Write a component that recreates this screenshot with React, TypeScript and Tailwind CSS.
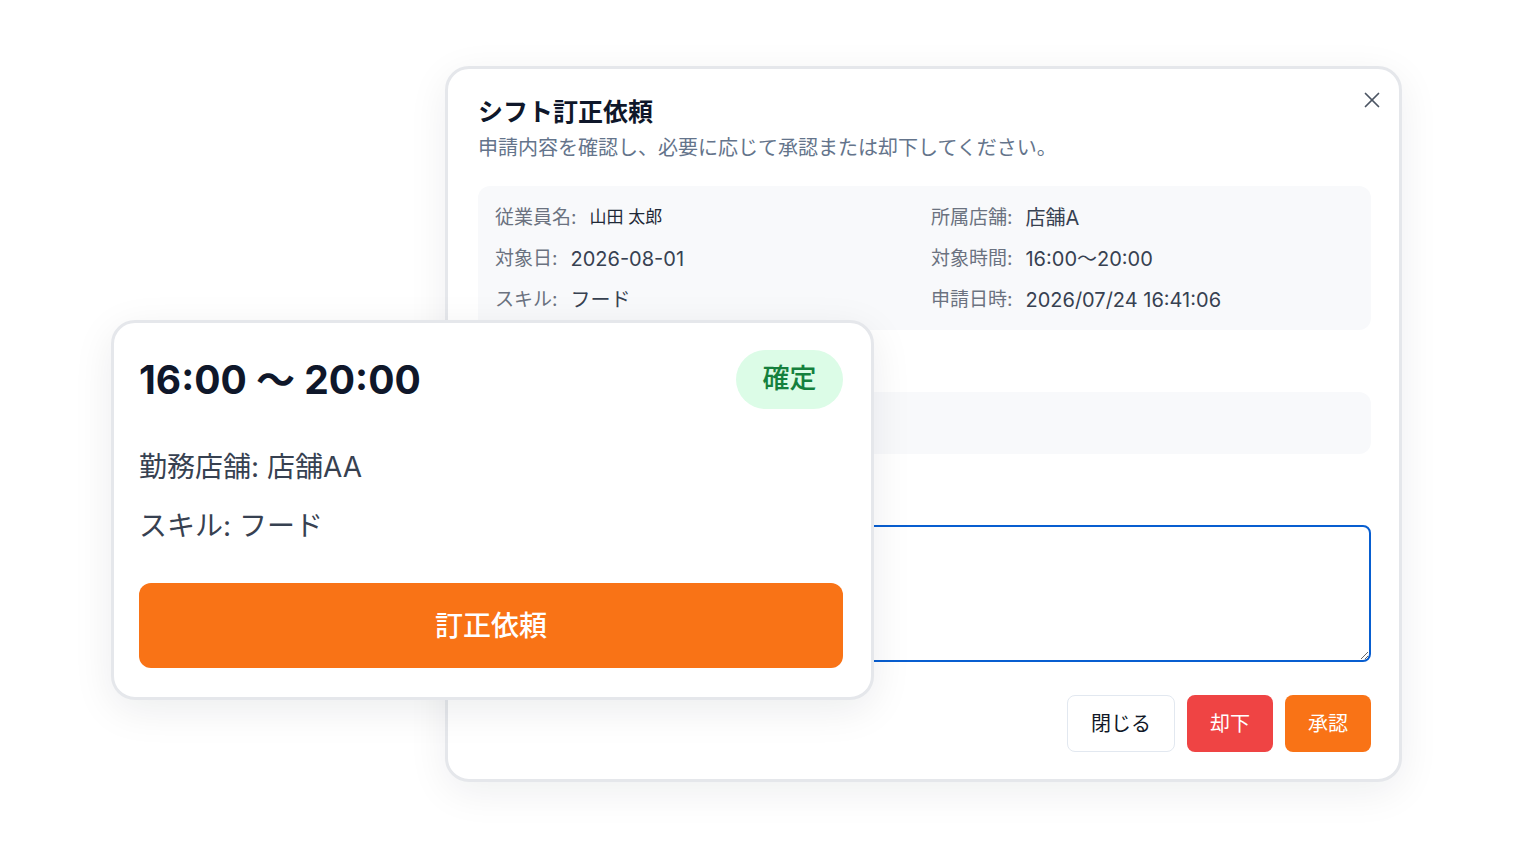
import { X } from "lucide-react";

const info = [
  { label: "従業員名:", value: "山田 太郎", small: true },
  { label: "所属店舗:", value: "店舗A" },
  { label: "対象日:", value: "2026-08-01" },
  { label: "対象時間:", value: "16:00〜20:00" },
  { label: "スキル:", value: "フード" },
  { label: "申請日時:", value: "2026/07/24 16:41:06" },
];

function ReviewDialog() {
  return (
    <div className="relative w-[957px] h-[716px] rounded-[24px] border-[3px] border-[#e5e7eb] bg-white pt-[27px] pl-[30px] pr-[28px] pb-[27px] shadow-[0_10px_40px_rgba(15,23,42,0.07)]">
      <button className="absolute top-[18px] right-[14px] text-[#4b5563]">
        <X size={26} strokeWidth={1.6} />
      </button>

      <h2 className="text-[25px] leading-8 font-bold text-[#0f172a]">シフト訂正依頼</h2>
      <p className="mt-[6px] text-[20px] leading-7 text-[#64748b]">
        申請内容を確認し、必要に応じて承認または却下してください。
      </p>

      {/* request info */}
      <div className="mt-6 grid grid-cols-2 gap-x-[13px] gap-y-[13px] rounded-xl bg-[#f8f9fb] px-[17px] pt-[18px] pb-[16px]">
        {info.map((row) => (
          <div key={row.label} className="flex items-center h-7 text-[19px]">
            <span className="text-[#6b7280]">{row.label}</span>
            <span className={row.small ? "ml-[13px] text-[17px] text-[#1f2937]" : "ml-[13px] text-[20px] text-[#374151]"}>
              {row.value}
            </span>
          </div>
        ))}
      </div>

      <p className="mt-[26px] text-[18px] leading-7 font-medium text-[#374151]">申請理由</p>
      <div className="mt-2 h-[62px] rounded-xl bg-[#f8f9fb]" />

      <p className="mt-5 text-[18px] leading-7 font-medium text-[#374151]">コメント</p>
      <textarea className="mt-[23px] block w-full h-[137px] rounded-lg border-2 border-[#085ed0] bg-white outline-none" />

      <div className="mt-[33px] flex justify-end gap-3">
        <button className="w-[108px] h-[57px] rounded-lg border border-[#e2e8f0] bg-white text-[20px] text-[#111827]">
          閉じる
        </button>
        <button className="w-[86px] h-[57px] rounded-lg bg-[#ef4444] text-[20px] text-white">却下</button>
        <button className="w-[86px] h-[57px] rounded-lg bg-[#f97316] text-[20px] text-white">承認</button>
      </div>
    </div>
  );
}

function ShiftCard() {
  return (
    <div className="absolute left-[111px] top-[320px] w-[763px] h-[380px] rounded-[24px] border-[3px] border-[#e5e7eb] bg-white pt-[27px] pl-[25px] pr-[28px] shadow-[0_10px_40px_rgba(15,23,42,0.08)]">
      <div className="flex items-center justify-between">
        <span className="text-[39px] leading-none font-bold text-[#0f172a]">16:00 ～ 20:00</span>
        <span className="flex items-center justify-center w-[107px] h-[59px] rounded-full bg-[#dcfce7] text-[27px] font-medium text-[#15803d]">
          確定
        </span>
      </div>

      <p className="mt-[38px] h-10 leading-10 text-[28px] text-[#374151]">勤務店舗: 店舗AA</p>
      <p className="mt-[19px] h-10 leading-10 text-[28px] text-[#374151]">スキル: フード</p>

      <button className="mt-[37px] w-full h-[85px] rounded-xl bg-[#f97316] text-[28px] font-medium text-white">
        訂正依頼
      </button>
    </div>
  );
}

export default function App() {
  return (
    <div className="relative w-[1513px] h-[848px] overflow-hidden bg-white font-['Inter','Noto_Sans_CJK_JP',sans-serif]">
      <div className="pl-[445px] pt-[66px]">
        <ReviewDialog />
      </div>
      <ShiftCard />
    </div>
  );
}
